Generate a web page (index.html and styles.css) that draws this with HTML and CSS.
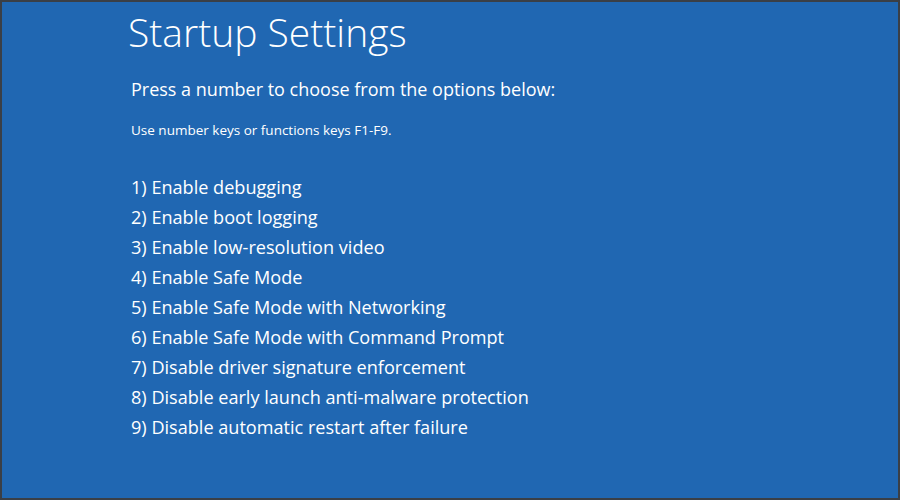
FILE: index.html
```html
<!DOCTYPE html>
<html>
<head>
<meta charset="utf-8">
<link rel="stylesheet" href="styles.css">
</head>
<body>
<div class="screen">
  <div class="content">
    <h1 class="title">Startup Settings</h1>
    <p class="lead">Press a number to choose from the options below:</p>
    <p class="hint">Use number keys or functions keys F1-F9.</p>
    <ol class="options">
      <li>1) Enable debugging</li>
      <li>2) Enable boot logging</li>
      <li>3) Enable low-resolution video</li>
      <li>4) Enable Safe Mode</li>
      <li>5) Enable Safe Mode with Networking</li>
      <li>6) Enable Safe Mode with Command Prompt</li>
      <li>7) Disable driver signature enforcement</li>
      <li>8) Disable early launch anti-malware protection</li>
      <li>9) Disable automatic restart after failure</li>
    </ol>
  </div>
</div>
</body>
</html>
```

FILE: styles.css
```css
html, body {
  margin: 0;
  padding: 0;
}
body {
  width: 900px;
  height: 500px;
  overflow: hidden;
  font-family: "Open Sans", "Noto Sans", sans-serif;
  color: #ffffff;
}
.screen {
  box-sizing: border-box;
  width: 900px;
  height: 500px;
  background: #2067b2;
  border: 2px solid #3a3f46;
}
.content {
  padding-left: 126px;
  padding-top: 4px;
}
.title {
  margin: 0;
  font-size: 39px;
  font-weight: 300;
  line-height: 52px;
}
.lead {
  margin: 19px 0 0 3px;
  font-size: 18px;
  font-weight: 400;
  line-height: 24px;
}
.hint {
  margin: 20px 0 0 3px;
  font-size: 13.5px;
  line-height: 18px;
}
.options {
  list-style: none;
  margin: 33px 0 0 3px;
  padding: 0;
  font-size: 18.1px;
  line-height: 30px;
}
```
